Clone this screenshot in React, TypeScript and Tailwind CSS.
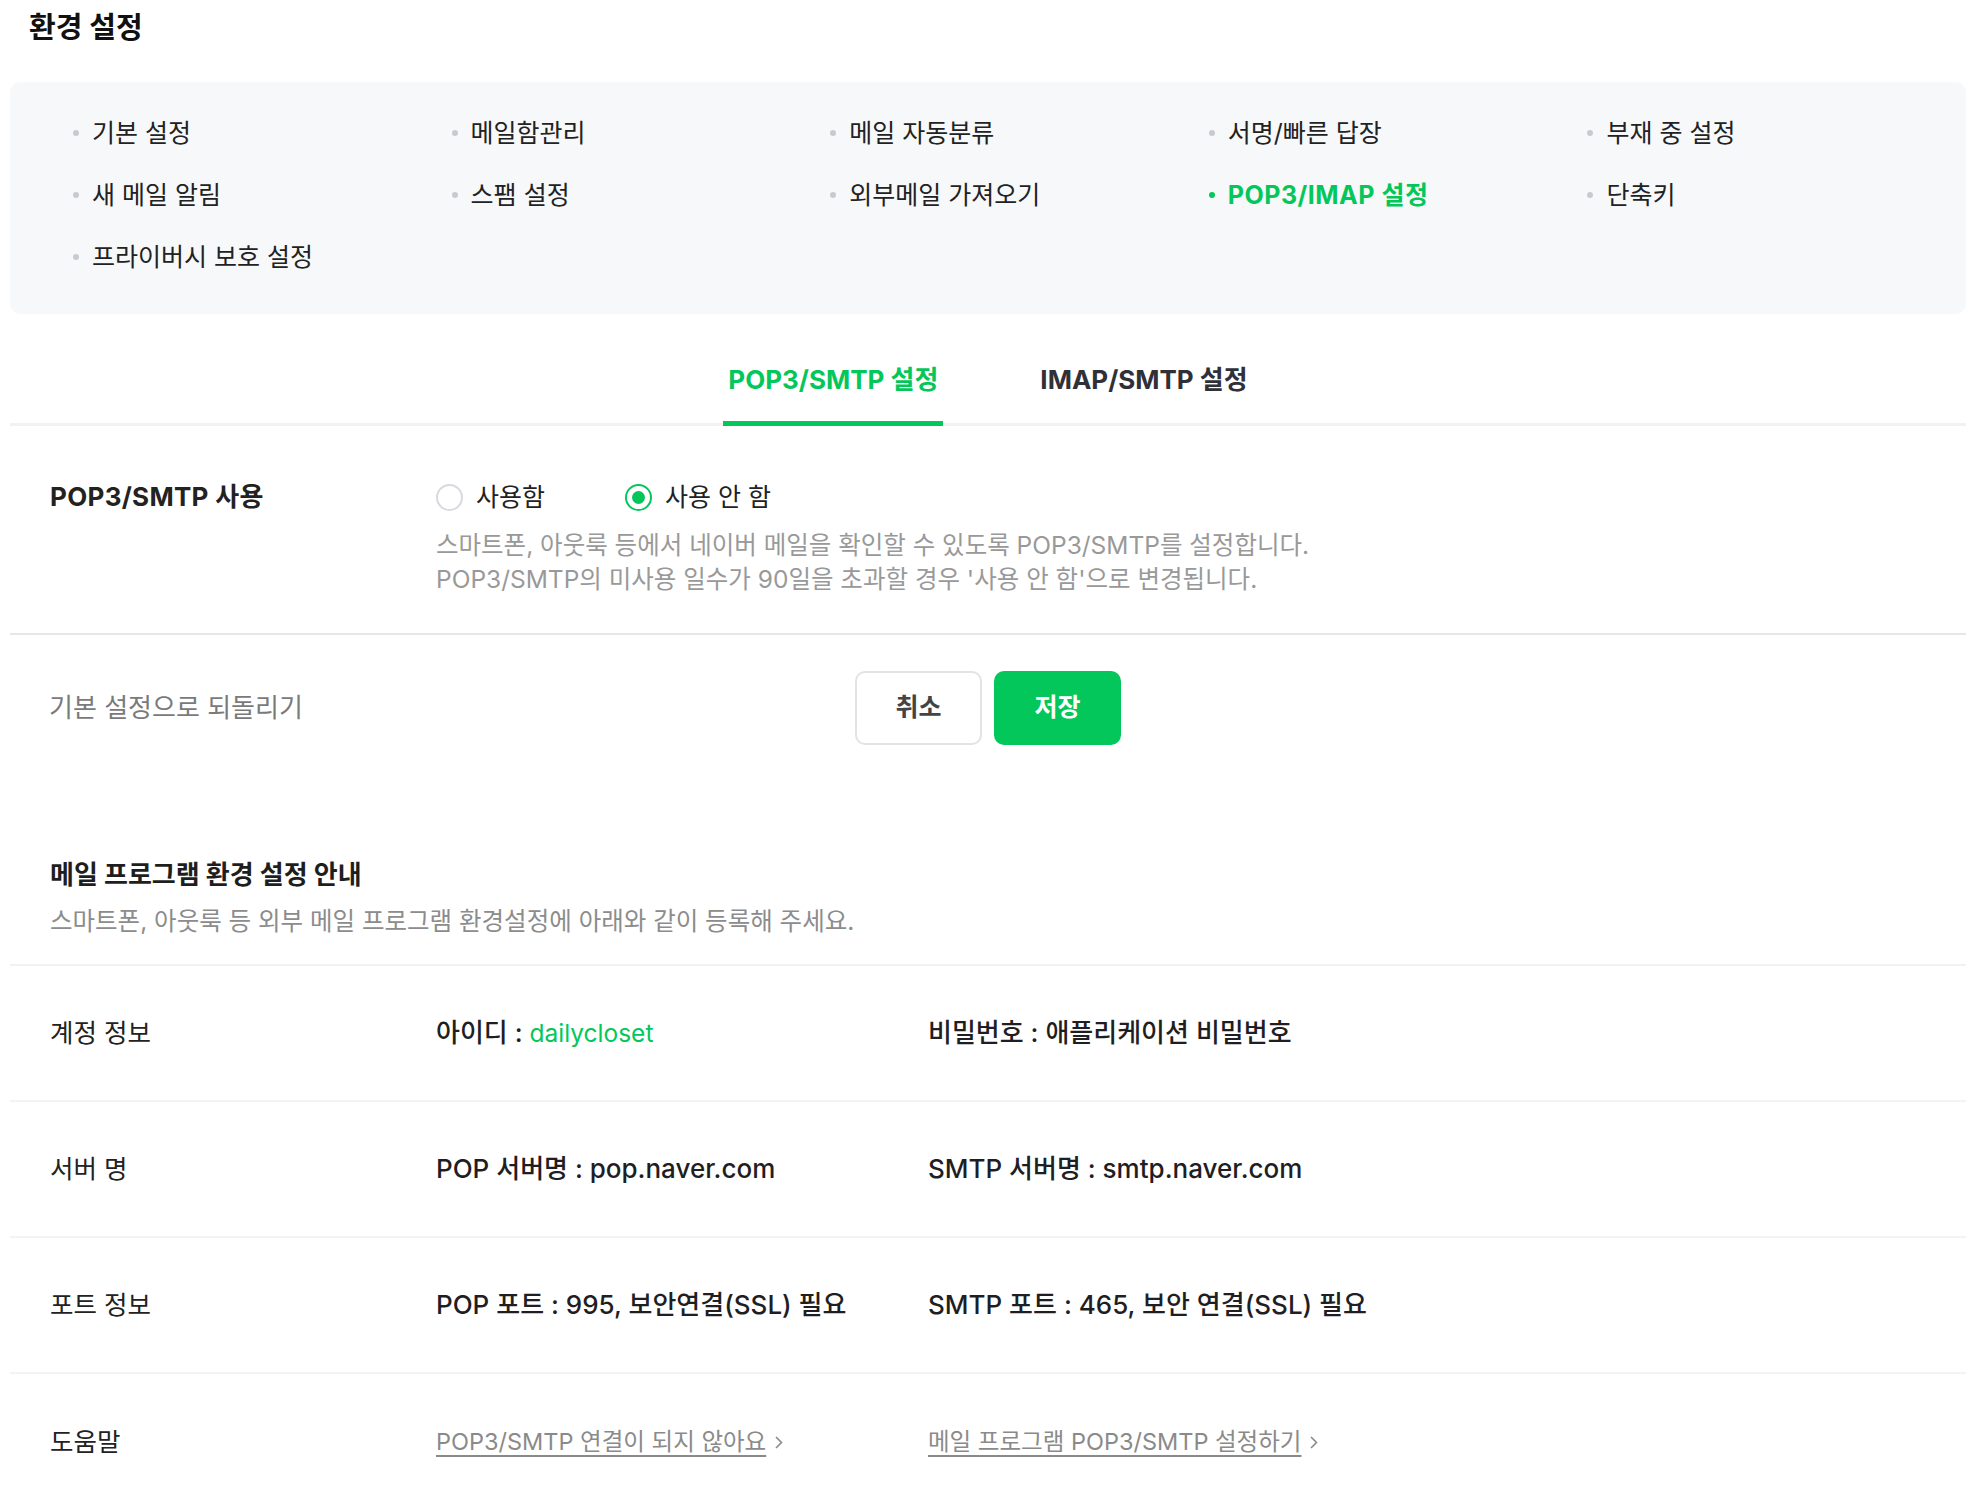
import React from "react";

type MenuItem = { label: string; active?: boolean };

const menuItems: MenuItem[] = [
  { label: "기본 설정" },
  { label: "메일함관리" },
  { label: "메일 자동분류" },
  { label: "서명/빠른 답장" },
  { label: "부재 중 설정" },
  { label: "새 메일 알림" },
  { label: "스팸 설정" },
  { label: "외부메일 가져오기" },
  { label: "POP3/IMAP 설정", active: true },
  { label: "단축키" },
  { label: "프라이버시 보호 설정" },
];

function Chevron() {
  return (
    <svg width="10" height="15" viewBox="0 0 10 15" className="shrink-0">
      <path d="M2 2l5.5 5.5L2 13" stroke="#8a8a8a" strokeWidth="1.6" fill="none" />
    </svg>
  );
}

function Radio({ checked, label }: { checked?: boolean; label: string }) {
  return (
    <div className="flex items-center gap-[13px]">
      {checked ? (
        <span className="flex h-[27px] w-[27px] items-center justify-center rounded-full border-2 border-[#03c75a] bg-white">
          <span className="h-[13px] w-[13px] rounded-full bg-[#03c75a]" />
        </span>
      ) : (
        <span className="h-[27px] w-[27px] rounded-full border-2 border-[#d8d9de] bg-white" />
      )}
      <span className="text-[25px] leading-[34px] text-[#222]">{label}</span>
    </div>
  );
}

function InfoRow({
  label,
  children,
  last,
}: {
  label: string;
  children: React.ReactNode;
  last?: boolean;
}) {
  return (
    <div
      className={
        "flex h-[136px] items-center pl-[40px] " +
        (last ? "" : "border-b-2 border-[#f3f3f3]")
      }
    >
      <div className="w-[386px] shrink-0 text-[25.5px] leading-[34px] text-[#222]">{label}</div>
      {children}
    </div>
  );
}

export default function App() {
  return (
    <div className="h-[1490px] w-[1970px] overflow-hidden bg-white text-[#222] font-[family-name:Inter,'Noto_Sans_CJK_KR',sans-serif]">
      <h1 className="pl-[29px] pt-[10px] text-[29px] font-bold leading-[36px] text-[#111]">
        환경 설정
      </h1>

      <div className="ml-[10px] w-[1956px]">
        {/* settings menu panel */}
        <div className="mt-[36px] grid grid-cols-5 gap-y-[30px] rounded-[10px] bg-[#f7f8fa] pb-[41px] pl-[63px] pt-[35px]">
          {menuItems.map((m) => (
            <div key={m.label} className="flex items-center gap-[13px]">
              <span
                className={
                  "h-[6px] w-[6px] rounded-full " + (m.active ? "bg-[#03c75a]" : "bg-[#c9cad0]")
                }
              />
              <span
                className={
                  "text-[25px] leading-[32px] " +
                  (m.active ? "font-bold tracking-[0.5px] text-[#03c75a]" : "text-[#222]")
                }
              >
                {m.label}
              </span>
            </div>
          ))}
        </div>

        {/* tabs */}
        <div className="mt-[37px] flex justify-center gap-[92px] border-b-[3px] border-[#f2f2f2]">
          <div className="relative -mb-[3px] border-b-[5px] border-[#03c75a] px-[5px] pb-[24px] pt-[12px] text-[26px] font-bold leading-[34px] text-[#03c75a]">
            POP3/SMTP 설정
          </div>
          <div className="relative -mb-[3px] border-b-[5px] border-transparent px-[5px] pb-[24px] pt-[12px] text-[26px] font-bold leading-[34px] text-[#303038]">
            IMAP/SMTP 설정
          </div>
        </div>

        {/* use setting */}
        <div className="flex border-b-2 border-[#e6e6e6] pb-[37px] pl-[40px] pt-[54px]">
          <div className="w-[386px] shrink-0 text-[26px] font-bold tracking-[0.3px] leading-[34px] text-[#222]">
            POP3/SMTP 사용
          </div>
          <div>
            <div className="flex items-center gap-[80px]">
              <Radio label="사용함" />
              <Radio label="사용 안 함" checked />
            </div>
            <div className="mt-[14px] text-[24.5px] leading-[34px] text-[#999]">
              <p>스마트폰, 아웃룩 등에서 네이버 메일을 확인할 수 있도록 POP3/SMTP를 설정합니다.</p>
              <p>POP3/SMTP의 미사용 일수가 90일을 초과할 경우 '사용 안 함'으로 변경됩니다.</p>
            </div>
          </div>
        </div>

        {/* buttons */}
        <div className="grid grid-cols-[1fr_auto_1fr] items-center pt-[36px]">
          <div className="pl-[39px] text-[26px] leading-[34px] text-[#7a7a7a]">기본 설정으로 되돌리기</div>
          <div className="flex gap-[12px]">
            <button className="h-[74px] w-[127px] rounded-[10px] border-2 border-[#e3e3e3] bg-white text-[25px] font-bold text-[#444]">
              취소
            </button>
            <button className="h-[74px] w-[127px] rounded-[10px] bg-[#03c75a] text-[25px] font-bold text-white">
              저장
            </button>
          </div>
          <div />
        </div>

        {/* info */}
        <div className="mt-[113px] border-b-2 border-[#f2f2f2] pb-[26px] pl-[40px]">
          <h2 className="text-[26px] font-bold leading-[34px] text-[#1e1e1e]">메일 프로그램 환경 설정 안내</h2>
          <p className="mt-[12px] text-[24.5px] leading-[34px] text-[#8c8c8c]">
            스마트폰, 아웃룩 등 외부 메일 프로그램 환경설정에 아래와 같이 등록해 주세요.
          </p>
        </div>

        <InfoRow label="계정 정보">
          <div className="w-[492px] shrink-0 text-[26px] font-medium leading-[34px] text-[#1e1e23]">
            아이디 : <span className="text-[24.5px] font-normal text-[#03c75a]">dailycloset</span>
          </div>
          <div className="text-[26px] font-medium leading-[34px] text-[#1e1e23]">비밀번호 : 애플리케이션 비밀번호</div>
        </InfoRow>
        <InfoRow label="서버 명">
          <div className="w-[492px] shrink-0 text-[26px] font-medium leading-[34px] text-[#1e1e23]">
            POP 서버명 : pop.naver.com
          </div>
          <div className="text-[26px] font-medium leading-[34px] text-[#1e1e23]">SMTP 서버명 : smtp.naver.com</div>
        </InfoRow>
        <InfoRow label="포트 정보">
          <div className="w-[492px] shrink-0 text-[26px] font-medium leading-[34px] text-[#1e1e23]">
            POP 포트 : 995, 보안연결(SSL) 필요
          </div>
          <div className="text-[26px] font-medium leading-[34px] text-[#1e1e23]">SMTP 포트 : 465, 보안 연결(SSL) 필요</div>
        </InfoRow>
        <InfoRow label="도움말" last>
          <div className="flex w-[492px] shrink-0 items-center gap-[8px]">
            <a className="text-[23.5px] leading-[34px] text-[#8a8a8a] underline underline-offset-[5px]">
              POP3/SMTP 연결이 되지 않아요
            </a>
            <Chevron />
          </div>
          <div className="flex items-center gap-[8px]">
            <a className="text-[23.5px] leading-[34px] text-[#8a8a8a] underline underline-offset-[5px]">
              메일 프로그램 POP3/SMTP 설정하기
            </a>
            <Chevron />
          </div>
        </InfoRow>
      </div>
    </div>
  );
}
